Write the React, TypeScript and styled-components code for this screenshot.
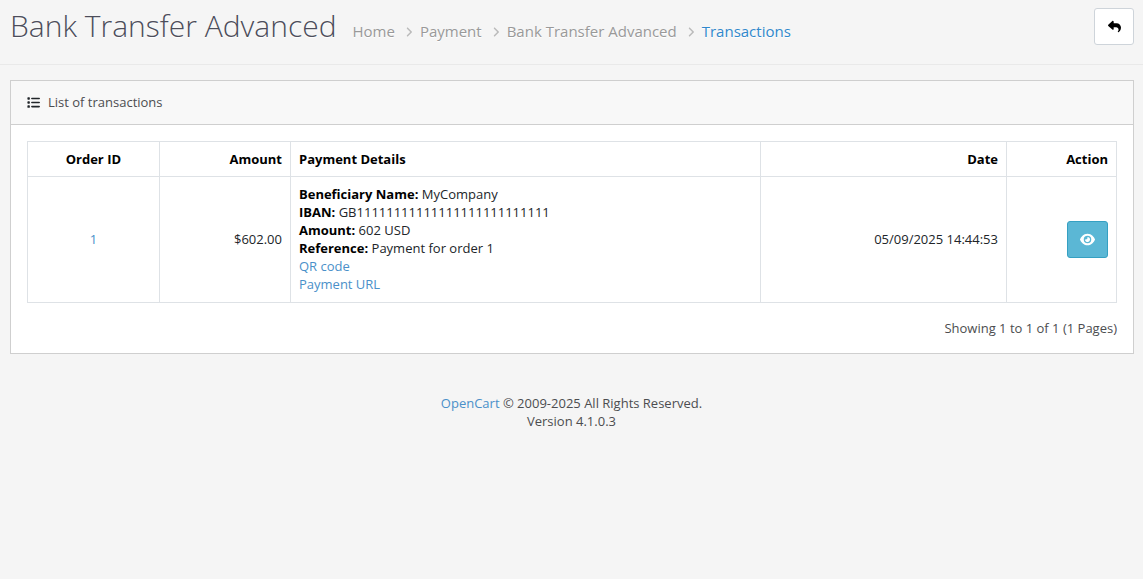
import React from 'react';
import styled, { createGlobalStyle, css } from 'styled-components';
import { FaAngleRight, FaEye, FaList, FaReply } from 'react-icons/fa6';

const GlobalStyle = createGlobalStyle`
  *, *::before, *::after { box-sizing: border-box; }
  body {
    margin: 0;
    background: #f5f5f5;
    color: #4c4d50;
    font-family: "Open Sans", sans-serif;
    font-size: 13px;
    line-height: 18px;
  }
`;

const Link = styled.a`
  color: #4a90c9;
  text-decoration: none;
  &:hover { text-decoration: underline; }
`;

const PageHeader = styled.header`
  display: flex;
  justify-content: space-between;
  align-items: flex-start;
  margin-bottom: 15px;
  padding: 8px 9px 19px 10px;
  border-bottom: 1px solid #e9e9e9;
`;

const TitleGroup = styled.div`
  display: flex;
  flex-wrap: wrap;
  align-items: baseline;
  column-gap: 16px;
`;

const Title = styled.h1`
  margin: 0;
  color: #4c4d5a;
  font-size: 30px;
  font-weight: 300;
  line-height: 36px;
  text-shadow: 0 1px #fff;
`;

const Breadcrumb = styled.ol`
  display: flex;
  flex-wrap: wrap;
  margin: 0;
  padding: 0;
  list-style: none;
  font-size: 15px;
  line-height: 22px;
  text-shadow: 0 1px #fff;
`;

const Crumb = styled.li`
  display: flex;
  align-items: center;
  svg {
    width: 10px;
    height: 12px;
    margin: 2px 6px 0 9px;
    color: #bbb;
  }
`;

const CrumbLink = styled.a<{ $current?: boolean }>`
  color: ${({ $current }) => ($current ? '#3088cc' : '#999')};
  text-decoration: none;
`;

const buttonVariants = {
  light: css`
    background: #fff;
    border-color: #ced4da;
    color: #000;
  `,
  info: css`
    background: #5bb7d5;
    border-color: #35a0c2;
    color: #fff;
  `,
};

const IconButton = styled.button<{ $variant: keyof typeof buttonVariants }>`
  display: inline-flex;
  align-items: center;
  justify-content: center;
  min-width: 40px;
  height: 37px;
  padding: 0 12px;
  border: 1px solid;
  border-radius: 3px;
  cursor: pointer;
  ${({ $variant }) => buttonVariants[$variant]}
`;

const Card = styled.section`
  margin: 0 9px 0 10px;
  border: 1px solid #cfcfcf;
  background: #fff;
`;

const CardHeader = styled.div`
  display: flex;
  align-items: center;
  gap: 8px;
  padding: 12px 16px 13px;
  border-bottom: 1px solid #cfcfcf;
  background: #f8f8f8;
`;

const CardBody = styled.div`
  padding: 16px;
`;

const Table = styled.table`
  width: 100%;
  table-layout: fixed;
  border-collapse: collapse;
  color: #212529;
`;

const Column = styled.col<{ $width: string }>`
  width: ${({ $width }) => $width};
`;

type Align = 'left' | 'center' | 'right';

const HeadCell = styled.th<{ $align: Align }>`
  padding: 8px;
  border: 1px solid #dee2e6;
  color: #000;
  font-weight: 700;
  text-align: ${({ $align }) => $align};
`;

const Cell = styled.td<{ $align: Align }>`
  padding: 8px 8px 9px;
  border: 1px solid #dee2e6;
  text-align: ${({ $align }) => $align};
  vertical-align: middle;
`;

const Detail = styled.div`
  strong { color: #000; font-weight: 700; }
`;

const Results = styled.div`
  padding-top: 16px;
  text-align: right;
`;

const Footer = styled.footer`
  padding: 40px 16px 32px;
  text-align: center;
`;

const crumbs = ['Home', 'Payment', 'Bank Transfer Advanced', 'Transactions'];

const columns: { label: string; align: Align; width: string }[] = [
  { label: 'Order ID', align: 'center', width: '12.1%' },
  { label: 'Amount', align: 'right', width: '12.05%' },
  { label: 'Payment Details', align: 'left', width: '43.15%' },
  { label: 'Date', align: 'right', width: '22.6%' },
  { label: 'Action', align: 'right', width: '10.1%' },
];

const details = [
  ['Beneficiary Name:', 'MyCompany'],
  ['IBAN:', 'GB11111111111111111111111111'],
  ['Amount:', '602 USD'],
  ['Reference:', 'Payment for order 1'],
];

export default function App() {
  return (
    <>
      <GlobalStyle />
      <PageHeader>
        <TitleGroup>
          <Title>Bank Transfer Advanced</Title>
          <nav aria-label="Breadcrumb">
            <Breadcrumb>
              {crumbs.map((name, i) => (
                <Crumb key={name}>
                  {i > 0 && <FaAngleRight aria-hidden />}
                  <CrumbLink href="#" $current={i === crumbs.length - 1}>{name}</CrumbLink>
                </Crumb>
              ))}
            </Breadcrumb>
          </nav>
        </TitleGroup>
        <IconButton type="button" $variant="light" aria-label="Back">
          <FaReply size={13} />
        </IconButton>
      </PageHeader>
      <main>
        <Card>
          <CardHeader>
            <FaList size={13} color="#212529" aria-hidden />
            List of transactions
          </CardHeader>
          <CardBody>
            <Table>
              <colgroup>
                {columns.map((c) => <Column key={c.label} $width={c.width} />)}
              </colgroup>
              <thead>
                <tr>
                  {columns.map((c) => (
                    <HeadCell key={c.label} scope="col" $align={c.align}>{c.label}</HeadCell>
                  ))}
                </tr>
              </thead>
              <tbody>
                <tr>
                  <Cell $align="center"><Link href="#">1</Link></Cell>
                  <Cell $align="right">$602.00</Cell>
                  <Cell $align="left">
                    {details.map(([label, value]) => (
                      <Detail key={label}><strong>{label}</strong> {value}</Detail>
                    ))}
                    <Detail><Link href="#">QR code</Link></Detail>
                    <Detail><Link href="#">Payment URL</Link></Detail>
                  </Cell>
                  <Cell $align="right">05/09/2025 14:44:53</Cell>
                  <Cell $align="right">
                    <IconButton type="button" $variant="info" aria-label="View">
                      <FaEye size={15} />
                    </IconButton>
                  </Cell>
                </tr>
              </tbody>
            </Table>
            <Results>Showing 1 to 1 of 1 (1 Pages)</Results>
          </CardBody>
        </Card>
      </main>
      <Footer>
        <div><Link href="#">OpenCart</Link> © 2009-2025 All Rights Reserved.</div>
        <div>Version 4.1.0.3</div>
      </Footer>
    </>
  );
}
